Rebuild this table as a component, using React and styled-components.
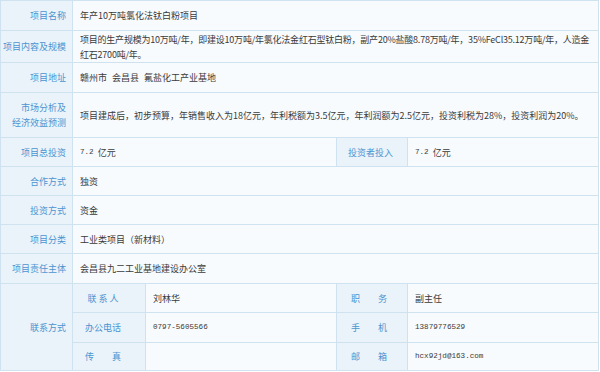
import React from "react";
import styled, { createGlobalStyle } from "styled-components";

const Global = createGlobalStyle`
  html, body { margin: 0; padding: 0; background: #ffffff; }
  body { font-family: "Noto Sans CJK SC", "Noto Sans", sans-serif; }
`;

const Sheet = styled.div`
  box-sizing: border-box;
  width: 599px;
  display: grid;
  grid-template-columns: 71px 72px 190px 70px 190px;
  grid-template-rows: 29px 31px 29px 44px 28px 28px 28px 28px 29px 28px 29px 27px;
  gap: 1px;
  padding: 1px;
  background: #cfe2ef;
  font-size: 9px;
  line-height: 15px;
`;

const Label = styled.div`
  grid-row: ${(p) => (p.$rows ? `span ${p.$rows}` : "auto")};
  display: flex;
  align-items: center;
  justify-content: ${(p) => (p.$center ? "center" : "flex-end")};
  text-align: ${(p) => (p.$center ? "center" : "right")};
  padding-right: ${(p) => (p.$pad != null ? p.$pad : 6)}px;
  background: #eaf3fa;
  color: #4a93d1;
  white-space: pre;
`;

const Value = styled.div`
  grid-column: ${(p) => (p.$span ? `span ${p.$span}` : "auto")};
  display: flex;
  align-items: center;
  padding-left: 7px;
  background: #f8fbfe;
  color: #3a3a3a;
  white-space: ${(p) => (p.$nowrap ? "nowrap" : "normal")};
  letter-spacing: ${(p) => (p.$tight ? "-0.22px" : "normal")};
  overflow: hidden;
`;

const Mono = styled.span`
  font-family: "Liberation Mono", "DejaVu Sans Mono", monospace;
  font-size: 7.6px;
  letter-spacing: 0;
`;

const Gap = styled.span`
  display: inline-block;
  width: ${(p) => p.$w}px;
`;

export default function App() {
  return (
    <>
      <Global />
      <Sheet>
        <Label>项目名称</Label>
        <Value $span={4}>年产10万吨氯化法钛白粉项目</Value>

        <Label>项目内容及规模</Label>
        <Value $span={4} $nowrap $tight>
          <div>
            项目的生产规模为10万吨/年，即建设10万吨/年氯化法金红石型钛白粉，副产20%盐酸8.78万吨/年，35%FeCl35.12万吨/年，人造金
            <br />
            红石2700吨/年。
          </div>
        </Value>

        <Label>项目地址</Label>
        <Value $span={4}>
          赣州市<Gap $w={5} />会昌县<Gap $w={5} />氟盐化工产业基地
        </Value>

        <Label>{"市场分析及\n经济效益预测"}</Label>
        <Value $span={4}>
          项目建成后，初步预算，年销售收入为18亿元，年利税额为3.5亿元，年利润额为2.5亿元，投资利税为28%，投资利润为20%。
        </Value>

        <Label>项目总投资</Label>
        <Value $span={2}>
          <Mono>7.2</Mono>
          <Gap $w={4} />亿元
        </Value>
        <Label $center $pad={3}>投资者投入</Label>
        <Value>
          <Mono>7.2</Mono>
          <Gap $w={4} />亿元
        </Value>

        <Label>合作方式</Label>
        <Value $span={4}>独资</Value>

        <Label>投资方式</Label>
        <Value $span={4}>资金</Value>

        <Label>项目分类</Label>
        <Value $span={4}>工业类项目（新材料）</Value>

        <Label>项目责任主体</Label>
        <Value $span={4}>会昌县九二工业基地建设办公室</Value>

        <Label $rows={3}>联系方式</Label>
        <Label $center $pad={12}>{"联 系 人"}</Label>
        <Value>刘林华</Value>
        <Label $center $pad={6}>{"职　　务"}</Label>
        <Value>副主任</Value>

        <Label $center $pad={12}>办公电话</Label>
        <Value>
          <Mono>0797-5605566</Mono>
        </Value>
        <Label $center $pad={6}>{"手　　机"}</Label>
        <Value>
          <Mono>13879776529</Mono>
        </Value>

        <Label $center $pad={12}>{"传　　真"}</Label>
        <Value />
        <Label $center $pad={6}>{"邮　　箱"}</Label>
        <Value>
          <Mono>hcx92jd@163.com</Mono>
        </Value>
      </Sheet>
    </>
  );
}
